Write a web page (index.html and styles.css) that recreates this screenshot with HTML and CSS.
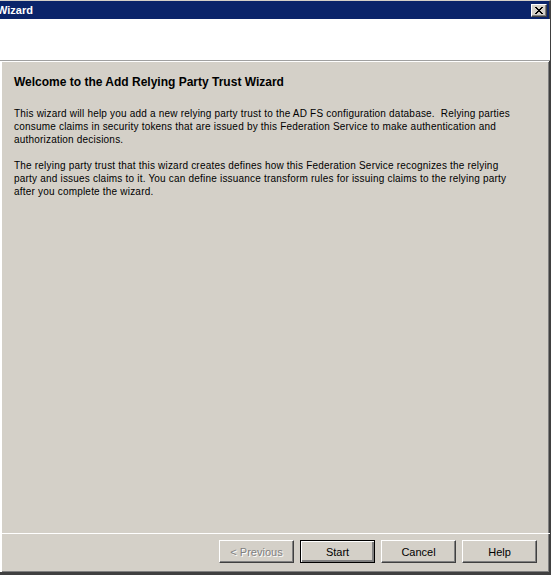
FILE: index.html
```html
<!DOCTYPE html>
<html lang="en">
<head>
    <meta charset="UTF-8">
    <title>Add Relying Party Trust Wizard</title>
    <link rel="stylesheet" href="styles.css">
</head>
<body>
    <div class="wizard-window">
        <div class="title-bar">
            <span class="title-text">Wizard</span>
            <button class="close-button" aria-label="Close">
                <svg width="8" height="7" viewBox="0 0 8 7">
                    <path d="M0 0h2v1h1v1h2V1h1V0h2v1H7v1H6v1H5v1h1v1h1v1h1v1H6V6H5V5H3v1H2v1H0V6h1V5h1V4h1V3H2V2H1V1H0z" fill="#000"/>
                </svg>
            </button>
        </div>

        <div class="wizard-header"></div>

        <div class="wizard-body">
            <div class="wizard-page">
                <h1 class="page-title">Welcome to the Add Relying Party Trust Wizard</h1>

                <p class="page-text">
                    This wizard will help you add a new relying party trust to the AD FS configuration database.&nbsp; Relying parties<br>
                    consume claims in security tokens that are issued by this Federation Service to make authentication and<br>
                    authorization decisions.
                </p>

                <p class="page-text">
                    The relying party trust that this wizard creates defines how this Federation Service recognizes the relying<br>
                    party and issues claims to it. You can define issuance transform rules for issuing claims to the relying party<br>
                    after you complete the wizard.
                </p>
            </div>

            <div class="wizard-footer">
                <button class="wizard-button" disabled>&lt; Previous</button>
                <button class="wizard-button default">Start</button>
                <button class="wizard-button">Cancel</button>
                <button class="wizard-button">Help</button>
            </div>
        </div>
    </div>
</body>
</html>
```

FILE: styles.css
```css
* {
    margin: 0;
    padding: 0;
    box-sizing: border-box;
}

body {
    background: #fff;
    font-family: "Liberation Sans", Arial, sans-serif;
    font-size: 11px;
    color: #000;
}

.wizard-window {
    width: 551px;
    height: 575px;
    display: flex;
    flex-direction: column;
    background: #d4d0c8;
    border-top: 1px solid #d4d0c8;
    border-right: 2px solid #404040;
    border-bottom: 3px solid #404040;
    box-shadow: inset -1px -1px 0 #808080;
}

/* classic caption */
.title-bar {
    height: 18px;
    display: flex;
    align-items: center;
    justify-content: space-between;
    background: #0a246a;
    padding-right: 2px;
}

.title-text {
    color: #fff;
    font-family: "Liberation Sans", Arial, sans-serif;
    font-weight: bold;
    font-size: 11px;
    margin-left: -3px;
}

.close-button {
    width: 16px;
    height: 13px;
    display: flex;
    align-items: center;
    justify-content: center;
    background: #d4d0c8;
    border: 1px solid;
    border-color: #fff #404040 #404040 #fff;
    box-shadow: inset -1px -1px 0 #808080;
}

.wizard-header {
    height: 42px;
    background: #fff;
    border-bottom: 1px solid #a0a0a0;
    margin-right: -1px;
}

.wizard-body {
    flex: 1;
    display: flex;
    flex-direction: column;
    border-top: 1px solid #fff;
    border-left: 2px solid #fff;
}

.wizard-page {
    flex: 1;
    padding: 14px 12px 0 12px;
}

.page-title {
    font-size: 12px;
    font-weight: bold;
    line-height: 13px;
    margin-bottom: 18px;
}

.page-text {
    font-size: 10px;
    letter-spacing: 0.2px;
    line-height: 13px;
    margin-bottom: 13px;
    white-space: nowrap;
}

.wizard-footer {
    display: flex;
    justify-content: flex-end;
    gap: 6px;
    height: 39px;
    padding: 6px 13px 0 0;
    border-top: 1px solid #fff;
    margin-right: -1px;
}

.wizard-button {
    width: 75px;
    height: 23px;
    font-family: "Liberation Sans", Arial, sans-serif;
    font-size: 11px;
    color: #000;
    background: #d4d0c8;
    border: 1px solid;
    border-color: #fff #404040 #404040 #fff;
    box-shadow: inset -1px -1px 0 #808080;
}

.wizard-button.default {
    border: 1px solid #000;
    box-shadow: inset 1px 1px 0 #fff, inset -2px -2px 0 #808080;
}

.wizard-button:disabled {
    color: #808080;
    text-shadow: 1px 1px 0 #fff;
}
```
